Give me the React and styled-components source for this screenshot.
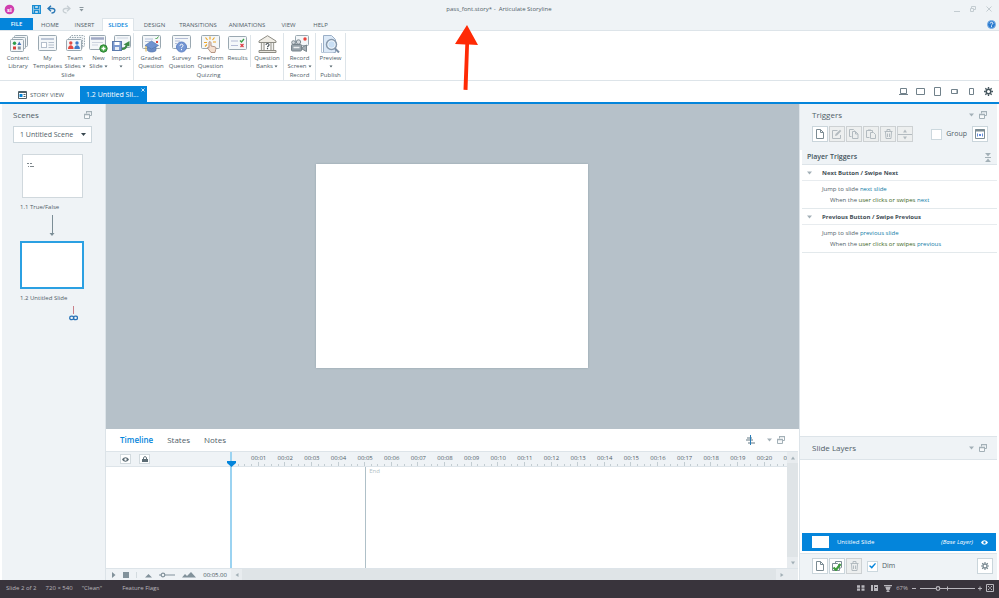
import React from "react";
import styled, { createGlobalStyle } from "styled-components";

const c = {
  blue: "#0485db",
  panel: "#eff3f6",
  line: "#dde4e9",
  text: "#4f6068",
  dark: "#44545c",
  icon: "#7b8d96",
  canvas: "#b6c1c9",
  status: "#39343c",
  edge: "#9aa8b1",
};

const Global = createGlobalStyle`
  * { box-sizing: border-box; }
  html, body, #root { height: 100%; margin: 0; }
  body { font-family: "Open Sans", "Noto Sans", sans-serif; font-size: 6px; line-height: 8px; color: ${c.text}; background: #fff; }
  button, select, input { font: inherit; color: inherit; margin: 0; padding: 0; border: 0; background: none; }
  svg { display: block; flex: none; }
  h2, h3, p { margin: 0; font-weight: 400; font-size: inherit; }
`;

const Window = styled.div`
  position: relative;
  display: flex;
  flex-direction: column;
  height: 100vh;
  min-height: 480px;
  overflow: hidden;
`;

/* ---------- title bar and ribbon ---------- */
const TitleBar = styled.header`
  display: grid;
  grid-template-columns: 1fr auto 1fr;
  align-items: center;
  height: 18px;
  padding: 0 5px 0 4px;
  background: ${c.panel};
`;
const QuickAccess = styled.div`
  display: flex;
  align-items: center;
  gap: 5px;
`;
const LogoSlot = styled.span`
  margin-right: 11px;
`;
const Title = styled.div`
  white-space: pre;
`;
const WindowButtons = styled.div`
  display: flex;
  justify-content: flex-end;
  gap: 6px;
  color: #c3ccd1;
`;
const GhostButton = styled.button`
  display: flex;
  align-items: center;
  justify-content: center;
  min-width: 10px;
  height: 12px;
  color: #8b979e;
`;
const FrameButton = styled(GhostButton)`
  color: #c3ccd1;
`;
const TabRow = styled.nav`
  display: flex;
  height: 13px;
  background: ${c.panel};
  border-bottom: 1px solid ${c.line};
`;
const FileTab = styled.button`
  width: 33px;
  color: #fff;
  font-weight: 600;
  background: ${c.blue};
`;
const RibbonTab = styled.button`
  width: ${(p) => p.$w}px;
  height: 13px;
  white-space: nowrap;
  color: ${(p) => (p.$active ? c.blue : c.text)};
  font-weight: ${(p) => (p.$active ? 600 : 400)};
  background: ${(p) => (p.$active ? "#fff" : "transparent")};
  border: 1px solid ${(p) => (p.$active ? c.line : "transparent")};
  border-bottom: 0;
`;
const HelpSlot = styled.button`
  display: flex;
  align-items: center;
  margin: 0 3px 0 auto;
`;
const Ribbon = styled.div`
  display: flex;
  height: 50px;
  padding: 2px 0 0 3px;
  border-bottom: 1px solid ${c.line};
`;
const Group = styled.section`
  display: flex;
  flex-direction: column;
  padding: 0 ${(p) => p.$pad || 0}px;
  border-right: 1px solid ${c.line};
`;
const GroupButtons = styled.div`
  display: flex;
  height: 38px;
`;
const GroupLabel = styled.h2`
  text-align: center;
`;
const RibbonButton = styled.button`
  display: flex;
  flex-direction: column;
  align-items: center;
  width: ${(p) => p.$w}px;
  white-space: nowrap;
`;
const ButtonText = styled.span`
  display: flex;
  align-items: center;
  gap: 1px;
  height: 8px;
`;
const IconSlot = styled.span`
  height: 21px;
  padding-top: 2px;
`;
const Divider = styled.i`
  width: 1px;
  height: 32px;
  margin: 2px 1px 0 0;
  background: ${c.line};
`;
const Caret = () => (
  <Svg w={4} h={4}><path d="M.5 1.500h3L2 3.500z" fill="currentColor" stroke="none" /></Svg>
);
const PanelCaret = () => (
  <Svg w={5} h={4}><path d="M0 .5h5L2.500 3.500z" fill="#a3b0b7" stroke="none" /></Svg>
);

/* ---------- document tabs ---------- */
const DocumentBar = styled.div`
  display: flex;
  align-items: flex-end;
  height: 23px;
  padding-right: 2px;
  border-bottom: 2px solid ${c.blue};
`;
const StoryView = styled.button`
  display: flex;
  align-items: center;
  gap: 3px;
  width: 80px;
  height: 15px;
  padding-left: 18px;
`;
const SlideTab = styled.div`
  position: relative;
  width: 67px;
  height: 16px;
  padding-left: 6px;
  font-size: 7px;
  line-height: 18px;
  color: #fff;
  background: ${c.blue};
`;
const CloseTab = styled.button`
  position: absolute;
  top: 2px;
  right: 2px;
`;
const Devices = styled.div`
  display: flex;
  margin-left: auto;
  align-self: center;
  color: #71818a;
`;
const DeviceButton = styled.button`
  display: flex;
  justify-content: center;
  width: 17px;
  color: ${(p) => (p.$strong ? "#44545c" : "inherit")};
`;

/* ---------- work area ---------- */
const Work = styled.main`
  flex: 1;
  min-height: 0;
  display: grid;
  grid-template-columns: 106px minmax(0, 1fr) 200px;
`;
const Scenes = styled.aside`
  padding: 6px 13px 0 11px;
  border-left: 2px solid #fff;
  border-right: 1px solid #dce3e8;
  background: ${c.panel};
`;
const PanelHead = styled.div`
  display: flex;
  align-items: center;
  justify-content: space-between;
  height: 10px;
`;
const PanelTitle = styled.h2`
  font-size: 8px;
  line-height: 10px;
`;
const PanelTools = styled.div`
  display: flex;
  align-items: center;
  gap: 5px;
  color: #a3b0b7;
`;
const SelectBox = styled.div`
  position: relative;
  display: flex;
  align-items: center;
  height: 17px;
  margin-top: 6px;
  color: #38474f;
`;
const SceneSelect = styled.select`
  appearance: none;
  width: 100%;
  height: 100%;
  padding-left: 6px;
  font-size: 7px;
  color: ${c.text};
  border: 1px solid #cbd6dc;
  background: #fff;
`;
const SelectArrow = styled.span`
  position: absolute;
  right: 6px;
  pointer-events: none;
`;
const SlideFlow = styled.div`
  display: flex;
  flex-direction: column;
  margin-top: 11px;
  padding-left: 7px;
`;
const Thumb = styled.div`
  width: 61px;
  height: 44px;
  margin-left: 2px;
  padding: 7px 4px;
  background: #fff;
  border: 1px solid #d0d8dd;
`;
const ActiveThumb = styled.div`
  width: 64px;
  height: 48px;
  background: #fff;
  border: 2px solid #2ba0e2;
`;
const ThumbLabel = styled.p`
  margin: 5px 0 4px;
`;
const FlowArrow = styled.div`
  height: 26px;
  padding-left: 29px;
  color: ${c.icon};
`;
const LinkMark = styled.div`
  padding-left: 49px;
`;
const Center = styled.div`
  display: flex;
  flex-direction: column;
  min-width: 0;
`;
const Stage = styled.div`
  flex: 1;
  display: flex;
  align-items: center;
  justify-content: center;
  padding: 0 1px 2px 0;
  background: ${c.canvas};
`;
const Slide = styled.div`
  width: 272px;
  aspect-ratio: 4 / 3;
  background: #fff;
  box-shadow: 0 0 2px #94a3ac;
`;

/* ---------- timeline ---------- */
const TimelinePanel = styled.section`
  display: flex;
  flex-direction: column;
  height: 151px;
  border-right: 1px solid #fff;
  background: #fff;
`;
const TimelineTabs = styled.div`
  display: flex;
  align-items: center;
  gap: 14px;
  height: 22px;
  padding: 0 13px 0 14px;
`;
const TimelineTab = styled.button`
  font-size: 8px;
  line-height: 10px;
  color: ${(p) => (p.$active ? c.blue : c.text)};
  font-weight: ${(p) => (p.$active ? 600 : 400)};
`;
const TimelineTools = styled(PanelTools)`
  margin-left: auto;
`;
const ToolGap = styled.span`
  margin-right: 7px;
`;
const TimelineGrid = styled.div`
  flex: 1;
  min-height: 0;
  display: grid;
  grid-template-columns: 124px minmax(0, 1fr) 11px;
  border-top: 1px solid ${c.line};
`;
const TrackHeader = styled.div`
  display: flex;
  gap: 8px;
  height: 15px;
  padding: 2px 0 0 14px;
  background: ${c.panel};
  border-bottom: 1px solid ${c.line};
`;
const TrackButton = styled.button`
  display: flex;
  align-items: center;
  justify-content: center;
  width: 11px;
  height: 10px;
  color: #5d6d75;
  background: #fff;
  border: 1px solid #d2dade;
`;
const Tracks = styled.div`
  position: relative;
  display: flex;
  flex-direction: column;
  border-left: 2px solid #9bd3f1;
`;
const Ruler = styled.div`
  height: 15px;
  overflow: hidden;
  background: ${c.panel};
  border-bottom: 1px solid ${c.line};
`;
const TimeLabels = styled.div`
  display: grid;
  grid-template-columns: 2.4% repeat(21, 4.8%);
  height: 10px;
  padding-top: 2px;
  justify-items: center;
`;
const Ticks = styled.div`
  display: grid;
  grid-template-columns: repeat(83, 1.2%);
  align-items: end;
  height: 4px;
`;
const Tick = styled.i`
  height: ${(p) => (p.$major ? 4 : 2)}px;
  border-right: 1px solid #c3cdd2;
`;
const TrackBody = styled.div`
  flex: 1;
  display: flex;
`;
const EndMark = styled.div`
  margin-left: 24%;
  padding: 0 3px;
  color: #b3bfc5;
  border-left: 1px solid #afc0c8;
`;
const Playhead = styled.div`
  position: absolute;
  top: 9px;
  left: -6px;
  color: ${c.blue};
`;
const ScrollTrack = styled.div`
  display: flex;
  flex-direction: column;
  justify-content: space-between;
  background: #dfe4e7;
`;
const ScrollButton = styled.button`
  display: flex;
  align-items: center;
  justify-content: center;
  width: 11px;
  height: 11px;
  color: #a2afb6;
  background: #e8ecef;
`;
const Transport = styled.div`
  display: flex;
  align-items: center;
  height: 12px;
  background: ${c.panel};
  border-top: 1px solid ${c.line};
  color: #82929b;
`;
const TransportLeft = styled.div`
  display: flex;
  align-items: center;
  justify-content: space-between;
  width: 125px;
  padding: 0 4px 0 5px;
`;
const Duration = styled.span`
  color: ${c.dark};
`;
const HScroll = styled.div`
  flex: 1;
  display: flex;
  justify-content: space-between;
  background: #dfe4e7;
`;
const ScrollCorner = styled.span`
  width: 11px;
  height: 11px;
  background: #e8ecef;
`;

/* ---------- triggers and layers ---------- */
const RightPanel = styled.aside`
  display: flex;
  flex-direction: column;
  border-left: 1px solid ${c.line};
  border-right: 2px solid #fff;
  background: #fff;
`;
const TriggerHead = styled.div`
  height: 46px;
  padding: 6px 9px 0 12px;
  background: ${c.panel};
`;
const TriggerTop = styled(PanelHead)`
  padding-right: 1px;
`;
const Toolbar = styled.div`
  display: flex;
  align-items: center;
  gap: 1px;
  padding-top: 6px;
`;
const ToolButton = styled.button`
  display: flex;
  align-items: center;
  justify-content: center;
  width: 16px;
  height: 16px;
  color: ${(p) => (p.$off ? "#b3bbc0" : "#7b8b93")};
  background: ${(p) => (p.$off ? "#edefef" : "#fff")};
  border: 1px solid ${(p) => (p.$off ? "#cdd1d3" : "#cad5db")};
`;
const CheckLabel = styled.label`
  display: flex;
  align-items: center;
  gap: 4px;
  margin: 0 4px 0 ${(p) => (p.$push ? "auto" : "4px")};
  font-size: 7px;
`;
const CheckBox = styled.input`
  appearance: none;
  display: grid;
  place-items: center;
  width: 11px;
  height: 11px;
  background: #fff;
  border: 1px solid #ccd8de;
  &:checked::after {
    content: "";
    width: 7px;
    height: 6px;
    background: ${c.blue};
    clip-path: polygon(0 50%, 16% 36%, 38% 60%, 86% 0, 100% 14%, 40% 96%);
  }
`;
const SectionHead = styled.h2`
  display: flex;
  align-items: center;
  justify-content: space-between;
  height: 15px;
  margin-left: 2px;
  padding: 0 6px 0 5px;
  font-size: 7px;
  font-weight: 600;
  color: ${c.dark};
  background: ${c.panel};
  border-bottom: 1px solid ${c.line};
`;
const TriggerTitle = styled.h3`
  display: flex;
  align-items: center;
  gap: 10px;
  height: 16px;
  margin-left: 2px;
  padding-left: 5px;
  font-weight: 700;
  color: #3f4d55;
  border-bottom: 1px solid #e8ecef;
`;
const TriggerBody = styled.div`
  height: 28px;
  margin-left: 2px;
  padding: 3px 0 0 20px;
  line-height: 11px;
  border-bottom: 1px solid #e3e9ec;
`;
const Condition = styled.p`
  padding-left: 8px;
`;
const TLink = styled.a`
  color: #0f7ba6;
  text-decoration: none;
`;
const Event = styled.span`
  color: #3c6421;
`;
const LayersHead = styled(PanelHead)`
  height: 24px;
  margin-top: auto;
  padding: 0 10px 0 12px;
  background: ${c.panel};
  border-top: 1px solid ${c.line};
  border-bottom: 1px solid ${c.line};
`;
const LayerList = styled.div`
  display: flex;
  align-items: flex-end;
  height: 93px;
  padding: 0 1px 2px 2px;
`;
const LayerRow = styled.div`
  flex: 1;
  display: flex;
  align-items: center;
  gap: 8px;
  height: 18px;
  padding: 0 8px 0 10px;
  color: #fff;
  background: ${c.blue};
`;
const LayerThumb = styled.i`
  width: 17px;
  height: 12px;
  background: #fff;
`;
const LayerKind = styled.em`
  margin-left: auto;
`;
const LayerFoot = styled.div`
  display: flex;
  align-items: center;
  gap: 1px;
  height: 27px;
  padding: 0 4px 2px 12px;
  background: ${c.panel};
  border-top: 1px solid ${c.line};
`;
const Spacer = styled.span`
  flex: 1;
`;

/* ---------- status bar ---------- */
const StatusBar = styled.footer`
  display: flex;
  align-items: center;
  gap: 9px;
  height: 18px;
  padding: 0 5px 2px 6px;
  color: #b9b7bd;
  background: ${c.status};
`;
const Flags = styled.span`
  margin-left: 11px;
`;
const StatusTools = styled.div`
  display: flex;
  align-items: center;
  gap: 4px;
  margin-left: auto;
`;
const Pointer = styled.div`
  position: absolute;
  top: 25px;
  left: 455px;
  pointer-events: none;
`;

/* ---------- icons ---------- */
function Svg({ w = 10, h = 10, vb, children }) {
  return (
    <svg width={w} height={h} viewBox={vb || `0 0 ${w} ${h}`} fill="none" stroke="currentColor" strokeWidth="1" aria-hidden="true">
      {children}
    </svg>
  );
}
const Frame = ({ x = 1, y = 1, w = 16, h = 14, dash }) => (
  <rect x={x} y={y} width={w} height={h} rx="1" fill="#f4f7f9" stroke={c.edge} strokeDasharray={dash} />
);
const ribbonIcons = {
  library: (
    <>
      <Frame x={5.5} y={0.5} w={13} h={11} /><Frame x={3.5} y={2.5} w={13} h={11} /><Frame x={1.5} y={4.5} w={13} h={12} />
      <g stroke="none"><circle cx="5.500" cy="8.300" r="1.700" fill="#2c9c4a" /><path d="M8.300 10l2-3.600 2 3.600z" fill="#4372b8" /><rect x="4" y="11.500" width="3" height="3" fill="#d9403b" /><rect x="8.800" y="11.500" width="3" height="3" fill="#8595a0" /></g>
    </>
  ),
  templates: (
    <>
      <Frame x={0.5} y={0.5} w={18} height={15} h={15} />
      <path d="M3 4h13" stroke="#bcc6d6" strokeWidth="2" /><rect x="3.500" y="7.500" width="5" height="5" stroke="#b5bfcc" fill="#fff" /><path d="M10.500 7.500h5.500M10.500 10h5.500M10.500 12.500h5.500" stroke="#b5bfcc" />
    </>
  ),
  team: (
    <>
      <Frame x={4.5} y={0.5} w={14} h={11} dash="1.500 1" /><Frame x={2.5} y={2.5} w={14} h={11} dash="1.500 1" /><Frame x={0.5} y={4.5} w={15} h={11} />
      <g stroke="none"><circle cx="4.800" cy="8" r="1.700" fill="#e24a42" /><path d="M2 14c0-5 5.600-5 5.600 0z" fill="#e24a42" /><circle cx="11" cy="8" r="1.700" fill="#3f7bc8" /><path d="M8.300 14c0-5 5.600-5 5.600 0z" fill="#3f7bc8" /></g>
    </>
  ),
  newSlide: (
    <>
      <Frame x={0.5} y={0.5} w={16} h={14} />
      <path d="M2 3.500h13" stroke="#a0a9c4" strokeWidth="2.500" /><path d="M3 7.500h11M3 10h6" stroke="#ccd3df" />
      <circle cx="14.500" cy="13.500" r="3.700" fill="#43a443" stroke="#2c8436" /><path d="M14.500 11.500v4M12.500 13.500h4" stroke="#fff" strokeWidth="1.400" />
    </>
  ),
  importSlide: (
    <>
      <Frame x={2.5} y={0.5} w={16} h={12} /><path d="M5 3h11" stroke="#ccd3df" />
      <rect x=".5" y="6.500" width="9" height="9" fill="#7c9ad0" stroke="#5c7aab" /><rect x="2.500" y="7" width="5" height="3" fill="#fff" stroke="none" /><rect x="3" y="12" width="4" height="3" fill="#e7edf5" stroke="none" />
      <path d="M10 14c3 0 4.500-2 5-5" stroke="#3d8a45" strokeWidth="2" /><path d="M11.500 9.500L17.500 6v5.500z" fill="#3d8a45" stroke="none" />
    </>
  ),
  graded: (
    <>
      <Frame x={0.5} y={0.5} w={18} h={13} />
      <path d="M3 4h8M3 6.500h5" stroke="#b7c3dc" /><path d="M13.500 3l1 1 2-2.500" stroke="#45a14a" /><path d="M14 6l2 2m0-2l-2 2" stroke="#df4b43" />
      <path d="M5.500 11v4.500c2 2 6.500 2 8.500 0V11z" fill="#6b8cc4" stroke="#5577b0" strokeWidth=".7" /><path d="M3 10.500l6.500-4.500 7 4.500-7 3.500z" fill="#6f92cf" stroke="#5577b0" strokeWidth=".7" /><path d="M4 11v5.500" stroke="#d6ad42" />
    </>
  ),
  survey: (
    <>
      <Frame x={0.5} y={0.5} w={18} h={13} /><path d="M3 3.500h13M3 6h5M3 8.500h2" stroke="#b4bdd6" />
      <circle cx="9.500" cy="12" r="5" fill="#7597d3" stroke="#5f82c4" /><path d="M8 10.800c0-2.200 3.200-2 3 0 0 1-1.500 1-1.500 2.300M9.500 14v1.200" stroke="#fff" />
    </>
  ),
  freeform: (
    <>
      <Frame x={0.5} y={0.5} w={18} h={13} />
      <path d="M9 1.500v3M4.500 2.500l2 2.500M13.500 2.500l-2 2.500M3 7.500h3M12 7h3M4 11.500l2-2" stroke="#eba528" strokeWidth="1.200" />
      <path d="M8 7c1-1 2 0 2 1v3l4 .8c1 .3 1 1.500.7 2.700L14 17.500h-4L6.500 13c0-1 1-1 1.500-.3z" fill="#f3dfd0" stroke="#a5826e" strokeWidth=".8" />
    </>
  ),
  results: (
    <>
      <Frame x={0.5} y={1.5} w={18} h={13} /><path d="M3 6h7M3 10.500h7" stroke="#b4bbd6" strokeWidth="1.200" /><path d="M12 5.500L13.500 7 16 4" stroke="#3b9f43" strokeWidth="1.300" /><path d="M12.500 9l3 3m0-3l-3 3" stroke="#dc3f46" strokeWidth="1.300" />
    </>
  ),
  banks: (
    <>
      <path d="M1 6L9.500.7 18 6v1.500H1z" fill="#f0ede6" stroke="#8d8c84" /><path d="M3.500 8v7M6 8v7M13 8v7M15.500 8v7" stroke="#a5a49c" strokeWidth="1.300" /><path d="M1 15.500h17v2H1z" fill="#e8e6de" stroke="#8d8c84" />
      <path d="M8 10c0-2 3.200-2 3 0 0 1-1.500 1-1.500 2.300M9.500 13v1.200" stroke="#4d555a" strokeWidth="1.200" />
    </>
  ),
  record: (
    <>
      <Frame x={5.5} y={0.5} w={13} h={10} /><circle cx="15" cy="4" r="1.700" fill="#e8433b" stroke="none" />
      <circle cx="3.500" cy="7.500" r="1.800" fill="#d5dade" stroke="#7e8a91" /><circle cx="8.500" cy="7" r="2.200" fill="#d5dade" stroke="#7e8a91" />
      <rect x="1.500" y="9.500" width="10" height="6.500" rx="1" fill="#97a2a9" stroke="#78848b" /><path d="M12 12.500l4.500-2.500v6.500L12 14z" fill="#a5afb5" stroke="#78848b" /><path d="M3.500 12.500h6" stroke="#eceff0" strokeWidth="1.500" />
    </>
  ),
  preview: (
    <>
      <path d="M2.500.5h8l4 4v13h-12z" fill="#dce9f7" stroke="#9aaec6" /><path d="M.5 8v9.500h12" stroke="#b9c8da" />
      <circle cx="10.500" cy="9.500" r="5" fill="#f5faff" stroke="#8698ac" strokeWidth="1.500" /><circle cx="10.500" cy="9.500" r="3.200" fill="#c9dff5" stroke="none" /><path d="M14 13.500l4 4" stroke="#7b8fa6" strokeWidth="2" />
    </>
  ),
};
const Undock = () => (
  <Svg w={8} h={8}><path d="M2.500 2.500v-2h5v4H6" /><path d="M.5 3.500h5v4h-5z" fill="#f7f9fa" /><path d="M0 3.500h6M2 .5h6" strokeWidth="1.500" /></Svg>
);
const Gear = ({ s = 9 }) => (
  <Svg w={s} h={s} vb="0 0 10 10"><circle cx="5" cy="5" r="2.500" strokeWidth="1.600" /><path d="M5 0v2M5 8v2M0 5h2M8 5h2M1.500 1.500l1.300 1.300M7.200 7.200l1.300 1.300M8.500 1.500L7.200 2.800M2.800 7.200L1.500 8.500" strokeWidth="1.500" /></Svg>
);
const PageIcon = () => <Svg w={8} h={10}><path d="M.5.5h4l3 3v6h-7zM4.500.5v3h3" /></Svg>;
const EditIcon = () => <Svg w={10} h={10}><path d="M5.500 1.500h-5v8h8V6" /><path d="M3 7l.5-2L8 .7l1.300 1.300L5 6.500z" fill="currentColor" stroke="none" /></Svg>;
const CopyIcon = () => <Svg w={10} h={10}><path d="M2.500 7.500h-2v-7h4l1 1" /><path d="M3.500 2.500h3l2.500 2.500v4.500H3.500zM6.500 2.500V5H9" /></Svg>;
const PasteIcon = () => <Svg w={10} h={10}><path d="M3.500 8.500h-3v-7h6V3M2 1h3" /><path d="M4.500 3.500h3l2 2v4h-5z" /></Svg>;
const TrashIcon = () => <Svg w={9} h={10}><path d="M.5 2.500h8M3 2V.5h3V2M1.500 3l.5 6.500h5L7.500 3M3.500 4.500v3.500M5.500 4.500v3.500" /></Svg>;
const EyeIcon = () => <Svg w={7} h={5}><path d="M0 2.500C2-.5 5-.5 7 2.500 5 5.500 2 5.500 0 2.500zM3.500 1.300a1.200 1.200 0 100 2.400 1.200 1.200 0 000-2.400z" fill="currentColor" fillRule="evenodd" stroke="none" /></Svg>;
const CollapseIcon = () => <Svg w={6} h={9}><path d="M0 4.500h6M.5.5h5M.5 8.500h5" stroke="#a3b0b7" /><path d="M1 1h4L3 3.500zM1 8h4L3 5.500z" fill="#a3b0b7" stroke="none" /></Svg>;
const Arrow = ({ d }) => {
  const paths = { up: "M0 3.500l2-3 2 3z", down: "M0 .5l2 3 2-3z", left: "M3.500 0v4L.5 2z", right: "M.5 0v4l3-2z" };
  return <Svg w={4} h={4}><path d={paths[d]} fill="currentColor" stroke="none" /></Svg>;
};

const RButton = ({ w, icon, lines, menu }) => (
  <RibbonButton $w={w}>
    <IconSlot><Svg w={19} h={18}>{ribbonIcons[icon]}</Svg></IconSlot>
    {lines.map((t, i) => (
      <ButtonText key={i}>{t}{menu && i === lines.length - 1 && <Caret />}</ButtonText>
    ))}
  </RibbonButton>
);

const tabs = [["HOME", 34], ["INSERT", 35], ["SLIDES", 32], ["DESIGN", 41], ["TRANSITIONS", 46], ["ANIMATIONS", 52], ["VIEW", 31], ["HELP", 33]];
const triggers = [
  { title: "Next Button / Swipe Next", target: "next slide", key: "next" },
  { title: "Previous Button / Swipe Previous", target: "previous slide", key: "previous" },
];
const devices = [
  ["Desktop", "M2.500 1.500h6v5h-6zM1 7.500h9"],
  ["Tablet landscape", "M1.500 1.500h8v6h-8z"],
  ["Tablet portrait", "M2.500.5h6v8h-6z"],
  ["Phone landscape", "M2.500 2.500h6v4h-6zM8 3v3"],
  ["Phone portrait", "M3.500 1.500h4v6h-4zM4 7.500h3"],
];

export default function App() {
  return (
    <Window>
      <Global />
      <TitleBar>
        <QuickAccess>
          <LogoSlot>
            <Svg w={11} h={11}>
              <circle cx="5.500" cy="5.500" r="4.800" fill="#cf3fae" stroke="none" />
              <text x="5.500" y="7.500" fontSize="6" fontWeight="700" textAnchor="middle" fill="#fff" stroke="none">sl</text>
            </Svg>
          </LogoSlot>
          <GhostButton aria-label="Save"><Svg w={9} h={9}><path d="M.7.7h7.600v7.600H.7zM2.500 1v2.500h4V1M2.500 8V5.500h4V8" stroke="#168bd2" strokeWidth="1.300" /></Svg></GhostButton>
          <GhostButton aria-label="Undo"><Svg w={9} h={9}><path d="M1 3.500h4.500c3.500 0 3 4.500-1 4.500M4 .7L1 3.500l3 2.800" stroke="#2877b5" strokeWidth="1.400" /></Svg></GhostButton>
          <GhostButton aria-label="Redo"><Svg w={9} h={9}><path d="M8 3.500H3.500C0 3.500.5 8 4.500 8M5 .7l3 2.800-3 2.800" stroke="#c6ced3" strokeWidth="1.300" /></Svg></GhostButton>
          <GhostButton aria-label="Customize"><Svg w={5} h={5}><path d="M.5.5h4" /><path d="M.5 2h4l-2 2.500z" fill="currentColor" stroke="none" /></Svg></GhostButton>
        </QuickAccess>
        <Title>{"pass_font.story* -  Articulate Storyline"}</Title>
        <WindowButtons>
          <FrameButton aria-label="Minimize"><Svg w={6} h={6}><path d="M0 5.500h6" /></Svg></FrameButton>
          <FrameButton aria-label="Restore"><Svg w={6} h={6}><path d="M1.500 2V.5h4v3H4M.5 2.500h3v3h-3z" /></Svg></FrameButton>
          <FrameButton aria-label="Close"><Svg w={6} h={6}><path d="M.5.5l5 5m0-5l-5 5" /></Svg></FrameButton>
        </WindowButtons>
      </TitleBar>
      <TabRow>
        <FileTab>FILE</FileTab>
        {tabs.map(([t, w]) => <RibbonTab key={t} $w={w} $active={t === "SLIDES"}>{t}</RibbonTab>)}
        <HelpSlot aria-label="Help">
          <Svg w={9} h={9}><circle cx="4.500" cy="4.500" r="4" fill="#2b7bd0" stroke="#7fb0e4" /><path d="M3.200 3.500c0-1.800 2.700-1.600 2.600 0 0 1-1.300.8-1.300 2M4.500 6.200v1" stroke="#fff" /></Svg>
        </HelpSlot>
      </TabRow>
      <Ribbon>
        <Group>
          <GroupButtons>
            <RButton w={30} icon="library" lines={["Content", "Library"]} />
            <RButton w={29} icon="templates" lines={["My", "Templates"]} />
            <RButton w={26} icon="team" lines={["Team", "Slides"]} menu />
            <RButton w={21} icon="newSlide" lines={["New", "Slide"]} menu />
            <RButton w={24} icon="importSlide" lines={["Import", ""]} menu />
          </GroupButtons>
          <GroupLabel>Slide</GroupLabel>
        </Group>
        <Group $pad={1}>
          <GroupButtons>
            <RButton w={32} icon="graded" lines={["Graded", "Question"]} />
            <RButton w={29} icon="survey" lines={["Survey", "Question"]} />
            <RButton w={29} icon="freeform" lines={["Freeform", "Question"]} />
            <RButton w={25} icon="results" lines={["Results"]} />
            <Divider />
            <RButton w={30} icon="banks" lines={["Question", "Banks"]} menu />
          </GroupButtons>
          <GroupLabel>Quizzing</GroupLabel>
        </Group>
        <Group>
          <GroupButtons><RButton w={31} icon="record" lines={["Record", "Screen"]} menu /></GroupButtons>
          <GroupLabel>Record</GroupLabel>
        </Group>
        <Group>
          <GroupButtons><RButton w={29} icon="preview" lines={["Preview", ""]} menu /></GroupButtons>
          <GroupLabel>Publish</GroupLabel>
        </Group>
      </Ribbon>
      <DocumentBar>
        <StoryView>
          <Svg w={9} h={8}><path d="M.5.5h8v7h-8z" fill="#fff" /><path d="M1 1.500h7" /><rect x="1.500" y="3" width="3" height="3" fill={c.blue} stroke="none" /><path d="M5.500 3.500h2M5.500 5.500h2" /></Svg>
          STORY VIEW
        </StoryView>
        <SlideTab>
          1.2 Untitled Sli...
          <CloseTab aria-label="Close tab"><Svg w={4} h={4}><path d="M.5.5l3 3m0-3l-3 3" strokeWidth=".8" /></Svg></CloseTab>
        </SlideTab>
        <Devices>
          {devices.map(([name, d]) => <DeviceButton key={name} aria-label={name}><Svg w={11} h={9}><path d={d} /></Svg></DeviceButton>)}
          <DeviceButton $strong aria-label="Player settings"><Gear /></DeviceButton>
        </Devices>
      </DocumentBar>
      <Work>
        <Scenes>
          <PanelHead><PanelTitle>Scenes</PanelTitle><PanelTools><Undock /></PanelTools></PanelHead>
          <SelectBox>
            <SceneSelect aria-label="Scene" defaultValue="1"><option value="1">1 Untitled Scene</option></SceneSelect>
            <SelectArrow><Svg w={5} h={3}><path d="M0 0h5L2.500 3z" fill="currentColor" stroke="none" /></Svg></SelectArrow>
          </SelectBox>
          <SlideFlow>
            <Thumb><Svg w={7} h={7}><path d="M0 1.500h2M3 1.500h2M1 4.500h1M3 4.500h4" stroke="#7e878c" /></Svg></Thumb>
            <ThumbLabel>1.1 True/False</ThumbLabel>
            <FlowArrow><Svg w={6} h={22}><path d="M3.500 0v18" /><path d="M.5 18h5L3 21z" fill="currentColor" stroke="none" /></Svg></FlowArrow>
            <ActiveThumb />
            <ThumbLabel>1.2 Untitled Slide</ThumbLabel>
            <LinkMark>
              <Svg w={9} h={16}><path d="M4.500 0v8" stroke="#c9808a" /><rect x=".7" y="10.200" width="4" height="3.500" rx="1.700" stroke="#2873b8" strokeWidth="1.300" /><rect x="4.500" y="10.200" width="4" height="3.500" rx="1.700" stroke="#2873b8" strokeWidth="1.300" /></Svg>
            </LinkMark>
          </SlideFlow>
        </Scenes>
        <Center>
          <Stage><Slide /></Stage>
          <TimelinePanel>
            <TimelineTabs>
              <TimelineTab $active>Timeline</TimelineTab>
              <TimelineTab>States</TimelineTab>
              <TimelineTab>Notes</TimelineTab>
              <TimelineTools>
                <ToolGap><Svg w={9} h={10}><path d="M1 3h5M0 5h7M2 8h7" stroke="#98a6ae" strokeWidth="1.700" /><path d="M4.500 0v10" stroke="#287cb7" /></Svg></ToolGap>
                <PanelCaret /><Undock />
              </TimelineTools>
            </TimelineTabs>
            <TimelineGrid>
              <TrackHeader>
                <TrackButton aria-label="Show all"><EyeIcon /></TrackButton>
                <TrackButton aria-label="Lock all"><Svg w={6} h={6}><path d="M1.500 3V1.500c0-1 3-1 3 0V3" /><path d="M0 3h6v3H0z" fill="currentColor" stroke="none" /></Svg></TrackButton>
              </TrackHeader>
              <Tracks>
                <Ruler>
                  <TimeLabels>
                    <span />
                    {Array.from({ length: 21 }, (_, i) => <span key={i}>00:{String(i + 1).padStart(2, "0")}</span>)}
                  </TimeLabels>
                  <Ticks>{Array.from({ length: 83 }, (_, i) => <Tick key={i} $major={i % 4 === 3} />)}</Ticks>
                </Ruler>
                <TrackBody><EndMark>End</EndMark></TrackBody>
                <Playhead><Svg w={11} h={6}><path d="M1 0h9v2L5.500 6 1 2z" fill="currentColor" stroke="none" /></Svg></Playhead>
              </Tracks>
              <ScrollTrack>
                <ScrollButton aria-label="Scroll up"><Arrow d="up" /></ScrollButton>
                <ScrollButton aria-label="Scroll down"><Arrow d="down" /></ScrollButton>
              </ScrollTrack>
            </TimelineGrid>
            <Transport>
              <TransportLeft>
                <Svg w={5} h={6}><path d="M1 0v6l3.500-3z" fill="currentColor" stroke="none" /></Svg>
                <Svg w={6} h={6}><path d="M0 0h6v6H0z" fill="currentColor" stroke="none" /></Svg>
                <Svg w={1} h={6}><path d="M.5 0v6" stroke="#d3dbdf" /></Svg>
                <Svg w={7} h={6}><path d="M0 5.500L3.500 2 7 5.500z" fill="currentColor" stroke="none" /></Svg>
                <Svg w={16} h={6}><path d="M0 3h2M6 3h10" strokeWidth="1.200" /><circle cx="4" cy="3" r="1.800" strokeWidth="1.200" /></Svg>
                <Svg w={14} h={6}><path d="M0 5.500L3 2l2 2 4-4 5 5.500z" fill="currentColor" stroke="none" /></Svg>
                <Duration>00:05.00</Duration>
              </TransportLeft>
              <HScroll>
                <ScrollButton aria-label="Scroll left"><Arrow d="left" /></ScrollButton>
                <ScrollButton aria-label="Scroll right"><Arrow d="right" /></ScrollButton>
              </HScroll>
              <ScrollCorner />
            </Transport>
          </TimelinePanel>
        </Center>
        <RightPanel>
          <TriggerHead>
            <TriggerTop><PanelTitle>Triggers</PanelTitle><PanelTools><PanelCaret /><Undock /></PanelTools></TriggerTop>
            <Toolbar>
              <ToolButton aria-label="New trigger"><PageIcon /></ToolButton>
              <ToolButton $off aria-label="Edit trigger"><EditIcon /></ToolButton>
              <ToolButton $off aria-label="Copy trigger"><CopyIcon /></ToolButton>
              <ToolButton $off aria-label="Paste trigger"><PasteIcon /></ToolButton>
              <ToolButton $off aria-label="Delete trigger"><TrashIcon /></ToolButton>
              <ToolButton $off aria-label="Reorder"><Svg w={14} h={14}><path d="M0 7.500h14" /><path d="M5 5.500l2-3 2 3zM5 9.500h4l-2 3z" fill="currentColor" stroke="none" /></Svg></ToolButton>
              <CheckLabel $push><CheckBox type="checkbox" />Group</CheckLabel>
              <ToolButton aria-label="Variables"><Svg w={10} h={10}><path d="M.5.5h9v9h-9z" /><path d="M0 1.500h10" strokeWidth="2" /><path d="M2.500 4.500v3M7.500 4.500v3M4 5l2 2m0-2L4 7" stroke="#3b6ed0" strokeWidth=".8" /></Svg></ToolButton>
            </Toolbar>
          </TriggerHead>
          <SectionHead>Player Triggers<CollapseIcon /></SectionHead>
          {triggers.map((t) => (
            <React.Fragment key={t.key}>
              <TriggerTitle><PanelCaret />{t.title}</TriggerTitle>
              <TriggerBody>
                <p>Jump to slide <TLink href="#slide">{t.target}</TLink></p>
                <Condition>When the <Event>user clicks or swipes</Event> <TLink href="#event">{t.key}</TLink></Condition>
              </TriggerBody>
            </React.Fragment>
          ))}
          <LayersHead><PanelTitle>Slide Layers</PanelTitle><PanelTools><PanelCaret /><Undock /></PanelTools></LayersHead>
          <LayerList>
            <LayerRow><LayerThumb />Untitled Slide<LayerKind>(Base Layer)</LayerKind><EyeIcon /></LayerRow>
          </LayerList>
          <LayerFoot>
            <ToolButton aria-label="New layer"><PageIcon /></ToolButton>
            <ToolButton aria-label="Duplicate layer"><Svg w={10} h={10}><path d="M3.500 2.500v-2h6v6l-2 1M.5 9.500v-7h5l2 2v5z" fill="#fff" /><path d="M1.500 6.500L4 9l4.500-6" stroke="#3f9c3c" strokeWidth="2.200" /></Svg></ToolButton>
            <ToolButton $off aria-label="Delete layer"><TrashIcon /></ToolButton>
            <CheckLabel><CheckBox type="checkbox" defaultChecked />Dim</CheckLabel>
            <Spacer />
            <ToolButton aria-label="Layer settings"><Gear s={8} /></ToolButton>
          </LayerFoot>
        </RightPanel>
      </Work>
      <StatusBar>
        <span>Slide 2 of 2</span><span>720 × 540</span><span>"Clean"</span><Flags>Feature Flags</Flags>
        <StatusTools>
          <Svg w={8} h={6}><path d="M0 1.500h3M4.500 1.500h3M0 4.700h3M4.500 4.700h3" strokeWidth="2.300" /></Svg>
          <Svg w={11} h={8}><path d="M2 1h7v6H2z" fill="currentColor" stroke="none" /><path d="M4.500 1v6M6 3.500h2" stroke="#39343c" /></Svg>
          <Svg w={8} h={7}><path d="M0 .7h8M1.500 2.500h5M2 4h4M4 4v2M2.500 6.500h3" strokeWidth="1.300" /></Svg>
          <span>67%</span>
          <Svg w={70} h={7}><path d="M0 3.500h4M66 3.500h4M68 1.500v4M8 3.500h16M28 3.500h35M35.500 1.500v4" /><circle cx="26" cy="3.500" r="1.800" strokeWidth="1.200" /></Svg>
          <Svg w={8} h={8}><path d="M.5.5h7v7h-7zM2 2l1.500 1.500M6 2L4.500 3.500M2 6l1.500-1.500M6 6L4.500 4.500" /></Svg>
        </StatusTools>
      </StatusBar>
      <Pointer>
        <Svg w={23} h={66}><path d="M12 0l11 20-9-.5-1.500 45.500-4-.2L10.300 19.500 0 19z" fill="#ff2a05" stroke="none" /></Svg>
      </Pointer>
    </Window>
  );
}
